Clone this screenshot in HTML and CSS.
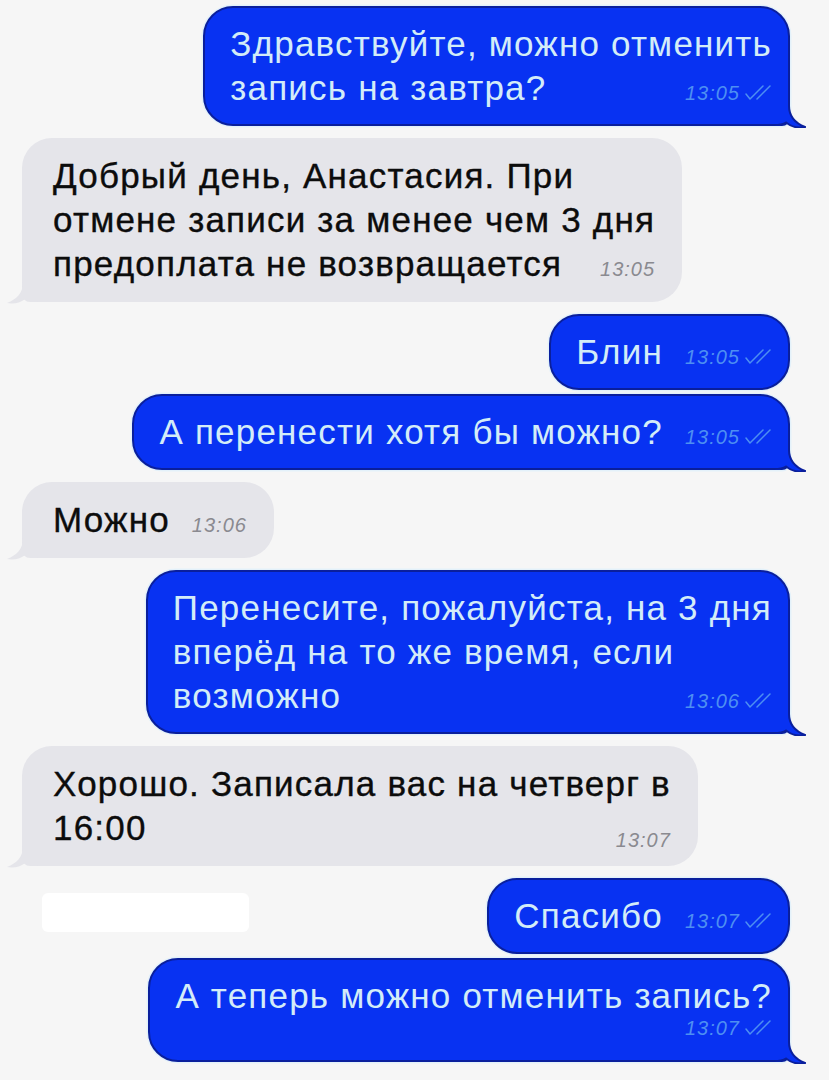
FILE: index.html
```html
<!DOCTYPE html>
<html lang="ru">
<head>
<meta charset="utf-8">
<title>Чат</title>
<link rel="stylesheet" href="styles.css">
</head>
<body>
<main class="chat">

  <div class="msg out first tail">
    <p class="line">Здравствуйте, можно отменить</p>
    <p class="line last"><span>запись на завтра?</span><span class="time">13:05<svg class="ticks" viewBox="0 0 27 15"><path d="M1 9 L5 14 L18 1 M12 14 L25 1"/></svg></span></p>
    <svg class="tail-shape" viewBox="0 0 32 36"><path class="fill" d="M0 2 H15 V14 C15 25 21 31 31 35 C24 36.5 17 34.5 12 30.5 C9 33 4 34 0 34 Z"/><path class="edge" d="M15 0 V14 C15 25 21 31 31 35 C24 36.5 17 34.5 12 30.5 C9 32.5 4 33 0 33"/></svg>
  </div>

  <div class="msg in tail">
    <p class="line">Добрый день, Анастасия. При</p>
    <p class="line">отмене записи за менее чем 3 дня</p>
    <p class="line last"><span>предоплата не возвращается</span><span class="time">13:05</span></p>
    <svg class="tail-shape" viewBox="0 0 32 36"><path class="fill" d="M0 2 H15 V14 C15 25 21 31 31 35 C24 36.5 17 34.5 12 30.5 C9 33 4 34 0 34 Z"/></svg>
  </div>

  <div class="msg out">
    <p class="line last"><span>Блин</span><span class="time">13:05<svg class="ticks" viewBox="0 0 27 15"><path d="M1 9 L5 14 L18 1 M12 14 L25 1"/></svg></span></p>
  </div>

  <div class="msg out cont tail">
    <p class="line last"><span>А перенести хотя бы можно?</span><span class="time">13:05<svg class="ticks" viewBox="0 0 27 15"><path d="M1 9 L5 14 L18 1 M12 14 L25 1"/></svg></span></p>
    <svg class="tail-shape" viewBox="0 0 32 36"><path class="fill" d="M0 2 H15 V14 C15 25 21 31 31 35 C24 36.5 17 34.5 12 30.5 C9 33 4 34 0 34 Z"/><path class="edge" d="M15 0 V14 C15 25 21 31 31 35 C24 36.5 17 34.5 12 30.5 C9 32.5 4 33 0 33"/></svg>
  </div>

  <div class="msg in tail">
    <p class="line last"><span>Можно</span><span class="time">13:06</span></p>
    <svg class="tail-shape" viewBox="0 0 32 36"><path class="fill" d="M0 2 H15 V14 C15 25 21 31 31 35 C24 36.5 17 34.5 12 30.5 C9 33 4 34 0 34 Z"/></svg>
  </div>

  <div class="msg out tail">
    <p class="line">Перенесите, пожалуйста, на 3 дня</p>
    <p class="line">вперёд на то же время, если</p>
    <p class="line last"><span>возможно</span><span class="time">13:06<svg class="ticks" viewBox="0 0 27 15"><path d="M1 9 L5 14 L18 1 M12 14 L25 1"/></svg></span></p>
    <svg class="tail-shape" viewBox="0 0 32 36"><path class="fill" d="M0 2 H15 V14 C15 25 21 31 31 35 C24 36.5 17 34.5 12 30.5 C9 33 4 34 0 34 Z"/><path class="edge" d="M15 0 V14 C15 25 21 31 31 35 C24 36.5 17 34.5 12 30.5 C9 32.5 4 33 0 33"/></svg>
  </div>

  <div class="msg in tail">
    <p class="line">Хорошо. Записала вас на четверг в</p>
    <p class="line last"><span>16:00</span><span class="time low">13:07</span></p>
    <svg class="tail-shape" viewBox="0 0 32 36"><path class="fill" d="M0 2 H15 V14 C15 25 21 31 31 35 C24 36.5 17 34.5 12 30.5 C9 33 4 34 0 34 Z"/></svg>
  </div>

  <div class="row">
    <div class="blank"></div>
    <div class="msg out">
      <p class="line last"><span>Спасибо</span><span class="time">13:07<svg class="ticks" viewBox="0 0 27 15"><path d="M1 9 L5 14 L18 1 M12 14 L25 1"/></svg></span></p>
    </div>
  </div>

  <div class="msg out cont tail">
    <p class="line">А теперь можно отменить запись?</p>
    <p class="stamp-line"><span class="time">13:07<svg class="ticks" viewBox="0 0 27 15"><path d="M1 9 L5 14 L18 1 M12 14 L25 1"/></svg></span></p>
    <svg class="tail-shape" viewBox="0 0 32 36"><path class="fill" d="M0 2 H15 V14 C15 25 21 31 31 35 C24 36.5 17 34.5 12 30.5 C9 33 4 34 0 34 Z"/><path class="edge" d="M15 0 V14 C15 25 21 31 31 35 C24 36.5 17 34.5 12 30.5 C9 32.5 4 33 0 33"/></svg>
  </div>

</main>
</body>
</html>
```

FILE: styles.css
```css
* {
  box-sizing: border-box;
}

html, body {
  margin: 0;
  padding: 0;
  background: #f6f6f6;
}

body {
  font-family: "Liberation Sans", Arial, sans-serif;
}

.chat {
  width: 829px;
  height: 1080px;
  overflow: hidden;
  display: flex;
  flex-direction: column;
  padding: 6px 39px 0 22px;
}

.msg {
  position: relative;
  margin-top: 12px;
  border-radius: 30px;
  font-size: 35px;
  letter-spacing: 1.2px;
  line-height: 44px;
}

.msg.first {
  margin-top: 0;
}

.msg.cont {
  margin-top: 4px;
}

.msg.out {
  align-self: flex-end;
  padding: 14px 16px 14px 25px;
  background: #0832f2;
  color: #d3ecf8;
  border: 2px solid #0a1f9c;
  box-shadow: 0 0 0 1.5px #e3f1fa;
}

.msg.in {
  align-self: flex-start;
  background: #e5e5ea;
  color: #0c0c0c;
  padding: 16px 27px 16px 31px;
}

.in .line > span:first-child,
.in .line:not(.last) {
  -webkit-text-stroke: 0.35px #0c0c0c;
}

.line {
  margin: 0;
  white-space: nowrap;
}

.line.last {
  display: flex;
  align-items: baseline;
  justify-content: space-between;
}

.stamp-line {
  margin: 0;
  height: 28px;
  display: flex;
  justify-content: flex-end;
  align-items: flex-start;
}

.time {
  margin-left: 22px;
  display: inline-flex;
  align-items: baseline;
  font-size: 20px;
  font-style: italic;
  letter-spacing: 1px;
  line-height: 1;
}

.out .time {
  color: #4d8ff2;
}

.in .time {
  color: #8a8a90;
}

.time.low {
  position: relative;
  top: 7px;
}

.ticks {
  width: 27px;
  height: 15px;
  margin-left: 5px;
  fill: none;
  stroke: currentColor;
  stroke-width: 1.5;
  stroke-linecap: round;
  stroke-linejoin: round;
}

.msg.tail.out {
  border-bottom-right-radius: 8px;
}

.msg.tail.in {
  border-bottom-left-radius: 8px;
}

.tail-shape {
  position: absolute;
  width: 32px;
  height: 36px;
  bottom: -4px;
}

.out .tail-shape {
  right: -18px;
}

.in .tail-shape {
  left: -16px;
  bottom: -2px;
  transform: scaleX(-1);
}

.out .tail-shape .fill {
  fill: #0832f2;
}

.in .tail-shape .fill {
  fill: #e5e5ea;
}

.tail-shape .edge {
  fill: none;
  stroke: #0a1f9c;
  stroke-width: 2;
}

.row {
  display: flex;
  justify-content: space-between;
  align-items: flex-start;
  margin-top: 12px;
}

.row .msg {
  margin-top: 0;
}

.blank {
  width: 207px;
  height: 39px;
  margin-left: 20px;
  margin-top: 15px;
  background: #ffffff;
  border-radius: 6px;
}
```
